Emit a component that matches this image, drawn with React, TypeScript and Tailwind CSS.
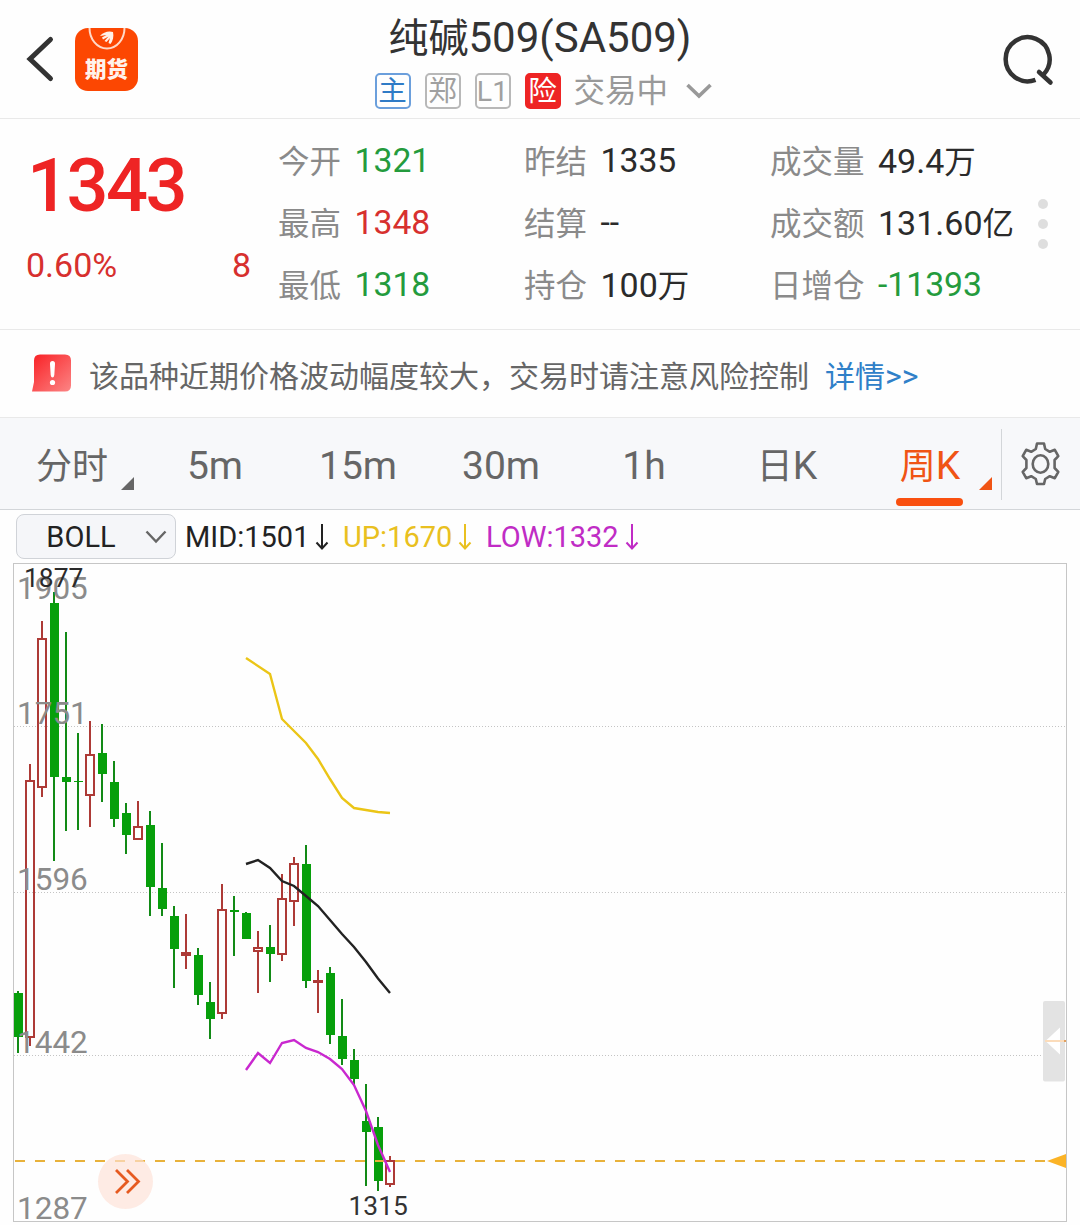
import React from "react";

type Candle = [kind: "up" | "down", high: number, top: number, bottom: number, low: number];

// Weekly candles, one every 12 units, starting at x = 18.
const candles: Candle[] = [
  ["down", 991, 993, 1037, 1053],
  ["up", 764, 780, 1038, 1046],
  ["up", 621, 638, 788, 797],
  ["down", 592, 603, 777, 861],
  ["down", 632, 777, 782, 831],
  ["down", 733, 781, 782, 830],
  ["up", 721, 754, 796, 827],
  ["down", 724, 753, 774, 802],
  ["down", 761, 782, 819, 827],
  ["down", 803, 813, 835, 854],
  ["up", 801, 826, 840, 840],
  ["down", 811, 825, 887, 916],
  ["down", 843, 888, 909, 916],
  ["down", 906, 916, 949, 988],
  ["up", 914, 952, 956, 969],
  ["down", 948, 955, 995, 1005],
  ["down", 982, 1002, 1019, 1039],
  ["up", 884, 909, 1014, 1019],
  ["down", 896, 910, 912, 956],
  ["down", 912, 913, 939, 939],
  ["up", 931, 947, 952, 993],
  ["down", 925, 947, 954, 982],
  ["up", 874, 898, 955, 961],
  ["up", 857, 863, 902, 926],
  ["down", 845, 864, 981, 988],
  ["up", 970, 980, 983, 1013],
  ["down", 967, 973, 1035, 1044],
  ["down", 999, 1036, 1059, 1065],
  ["down", 1049, 1060, 1079, 1086],
  ["down", 1084, 1121, 1132, 1186],
  ["down", 1117, 1127, 1181, 1191],
  ["up", 1156, 1160, 1185, 1187],
];

const upperBand =
  "246,658 270,674 282,719 306,743 318,759 330,779 342,798 354,808 378,812 390,813";
const middleBand =
  "246,864 258,860 270,868 282,881 294,886 306,896 318,906 330,920 342,934 354,947 366,962 378,978.5 390,993";
const lowerBand =
  "246,1070 258,1053 270,1063 282,1043 294,1040 306,1048 318,1052 330,1059 342,1069 354,1085 366,1111 378,1145 390,1172";

const axis = [
  ["1905", 599],
  ["1751", 724],
  ["1596", 890],
  ["1442", 1053],
  ["1287", 1219],
] as const;

function CandleShape({ data, x }: { data: Candle; x: number }) {
  const [kind, high, top, bottom, low] = data;
  if (kind === "down") {
    return (
      <g fill="#079f0b">
        <rect x={x - 1} y={high} width={2} height={low - high} fill="#128a16" />
        <rect x={x - 4} y={top} width={9} height={bottom - top} />
      </g>
    );
  }
  return (
    <g fill="#ad3a36">
      <rect x={x - 1} y={high} width={2} height={top - high} />
      <rect x={x - 1} y={bottom} width={2} height={low - bottom} />
      {bottom - top < 5 ? (
        <rect x={x - 5} y={top} width={10} height={bottom - top} />
      ) : (
        <rect x={x - 4} y={top + 1} width={8} height={bottom - top - 2} fill="none" stroke="#ad3a36" strokeWidth={2} />
      )}
    </g>
  );
}

function Chart() {
  return (
    <svg className="block h-[662px] w-full" viewBox="0 563 1080 662" fontFamily="Roboto, sans-serif">
      <rect x="13.5" y="563.5" width="1053" height="658" fill="none" stroke="#c6c6c6" />
      {[726.5, 892.5, 1055.5].map((y) => (
        <line key={y} x1="14" x2="1066" y1={y} y2={y} stroke="#c4c4c4" strokeDasharray="1 2" />
      ))}
      {candles.map((c, i) => (
        <CandleShape key={i} data={c} x={18 + i * 12} />
      ))}
      {axis.map(([label, y]) => (
        <text key={label} x="17" y={y} fontSize="31.5" fill="#8b8b8b">
          {label}
        </text>
      ))}
      <text x="24" y="587" fontSize="26.4" fill="#2a2a2a">1877</text>
      <text x="348.5" y="1215" fontSize="26.4" fill="#333">1315</text>
      <polyline points={upperBand} fill="none" stroke="#ebc516" strokeWidth="2.4" />
      <polyline points={middleBand} fill="none" stroke="#222" strokeWidth="2.4" />
      <line x1="15" x2="1048" y1="1161" y2="1161" stroke="#e9b23a" strokeWidth="2.2" strokeDasharray="10 10" />
      <polyline points={lowerBand} fill="none" stroke="#c928cf" strokeWidth="2.4" />
      <path d="M1047 1161 L1066 1154 V1168 Z" fill="#fbb326" />
      <circle cx="125.5" cy="1181.5" r="27.5" fill="#fde0d6" fillOpacity="0.66" />
      <path d="M116 1170 L127.5 1181.5 L116 1193 M127 1170 L138.5 1181.5 L127 1193" fill="none" stroke="#e65a20" strokeWidth="2.8" />
      <rect x="1043" y="1001" width="22" height="80.500" rx="2" fill="#e3e3e3" />
      <path d="M1045.5 1041 L1060 1027.5 V1054.5 Z" fill="#fff" />
      <line x1="1045" x2="1065" y1="1041" y2="1041" stroke="#fbdcbb" strokeWidth="2" />
      <rect x="1064" y="1040" width="2" height="2" fill="#e0a060" />
    </svg>
  );
}

function AppLogo() {
  return (
    <div className="relative h-[63px] w-[63px] overflow-hidden rounded-[13px] bg-[#fc4702]">
      <svg className="absolute inset-0" width="63" height="63" viewBox="0 0 63 63">
        <path d="M14.5 0 C14.5 11 22 20.5 32 20.5 S49.5 11 49.5 0" fill="none" stroke="#ffd9c7" strokeWidth="2" />
        <path d="M25 8 C28 4 34 2.5 38 4 C39 8 38 13 35.500 16 L33.500 15 L35 10 L31.500 14 L29.500 13 L33.500 8.500 L28 11.500 L27 9.500 L31.500 7 Z" fill="#fff1e8" />
      </svg>
      <div className="absolute left-[10px] top-[30px] whitespace-nowrap text-[21.500px] font-black leading-[24px] text-[#fff3ec]">期货</div>
    </div>
  );
}

function Tag({ text, tone }: { text: string; tone: string }) {
  return (
    <span className={"flex h-[36px] w-[36px] shrink-0 items-center justify-center rounded-[5px] border-2 pt-[2px] text-[28.500px] leading-none " + tone}>
      {text}
    </span>
  );
}

function Header() {
  return (
    <header className="flex h-[119px] border-b border-[#e9e9e9]">
      <div className="flex w-[340px] items-center pl-[25px]">
        <svg width="30" height="48" viewBox="0 0 30 48" className="mr-[20px]">
          <path d="M25.500 4.500 L5 24 L25.500 43.500" fill="none" stroke="#333" strokeWidth="5" strokeLinecap="round" />
        </svg>
        <AppLogo />
      </div>
      <div className="flex w-[400px] flex-col items-center">
        <h1 className="mt-[12px] whitespace-nowrap text-[42px] leading-[52px] text-[#333]">
          <span className="text-[40px]">纯碱</span>509(SA509)
        </h1>
        <div className="mt-[8px] flex h-[36px] w-[340px] items-center gap-[14px] pl-[4.500px]">
          <Tag text="主" tone="border-[#6b9fdc] text-[#2f7bc6]" />
          <Tag text="郑" tone="border-[#b8b8b8] text-[#a0a0a0]" />
          <Tag text="L1" tone="border-[#b8b8b8] text-[#a0a0a0]" />
          <Tag text="险" tone="border-[#ee2424] bg-[#ee2424] text-white" />
          <span className="-ml-px mt-[2px] whitespace-nowrap text-[31.500px] leading-[36px] text-[#999]">交易中</span>
          <svg width="28" height="18" viewBox="0 0 28 18" className="ml-[3px] shrink-0">
            <path d="M2.500 3 L14 14 L25.500 3" fill="none" stroke="#999" strokeWidth="3.600" />
          </svg>
        </div>
      </div>
      <div className="flex flex-1 justify-end pr-[25px] pt-[33px]">
        <svg width="53" height="54" viewBox="0 0 53 54">
          <path d="M33.500 46.800 A22 22 0 1 1 41.500 41.500" fill="none" stroke="#333" strokeWidth="4.500" />
          <path d="M37 39 L48.500 49.500" fill="none" stroke="#333" strokeWidth="4.500" strokeLinecap="round" />
        </svg>
      </div>
    </header>
  );
}

const stats: { label: string; value: string; unit?: string; color: string }[] = [
  { label: "今开", value: "1321", color: "text-[#249b3d]" },
  { label: "昨结", value: "1335", color: "text-[#2b2b2b]" },
  { label: "成交量", value: "49.4", unit: "万", color: "text-[#2b2b2b]" },
  { label: "最高", value: "1348", color: "text-[#d7302e]" },
  { label: "结算", value: "--", color: "text-[#2b2b2b]" },
  { label: "成交额", value: "131.60", unit: "亿", color: "text-[#2b2b2b]" },
  { label: "最低", value: "1318", color: "text-[#249b3d]" },
  { label: "持仓", value: "100", unit: "万", color: "text-[#2b2b2b]" },
  { label: "日增仓", value: "-11393", color: "text-[#249b3d]" },
];

function Quote() {
  return (
    <section className="flex h-[211px] border-b border-[#e9e9e9]">
      <div className="w-[278px] pl-[26px]">
        <div className="ml-px mt-[27px] text-[74px] font-medium leading-[80px] tracking-[-2.600px] text-[#ee2424]">1343</div>
        <div className="mt-[18px] flex w-[225px] justify-between text-[34px] leading-[42px] text-[#d7302e]">
          <span>0.60%</span>
          <span>8</span>
        </div>
      </div>
      <div className="grid w-[746px] grid-cols-[246px_246px_254px] grid-rows-[62px_62px_62px] pt-[12px]">
        {stats.map((s) => (
          <div key={s.label} className="flex items-center whitespace-nowrap leading-[62px]">
            <span className="mt-[2px] text-[31.500px] text-[#8a8a8a]">{s.label}</span>
            <span className={(s.unit ? "ml-[13.500px] text-[34px] " : "-mt-[2px] ml-[13.500px] text-[33.700px] ") + s.color}>
              {s.value}
              {s.unit && <span className="text-[31.500px]">{s.unit}</span>}
            </span>
          </div>
        ))}
      </div>
      <div className="flex flex-col gap-[10px] pl-[14px] pt-[80px]">
        <i className="h-[10px] w-[10px] rounded-full bg-[#dedede]" />
        <i className="h-[10px] w-[10px] rounded-full bg-[#dedede]" />
        <i className="h-[10px] w-[10px] rounded-full bg-[#dedede]" />
      </div>
    </section>
  );
}

function Notice() {
  return (
    <section className="flex h-[88px] items-center border-b border-[#e9e9e9] pl-[32px]">
      <svg width="40" height="38" viewBox="0 0 40 38" className="mb-px shrink-0">
        <defs>
          <linearGradient id="alert" x1="0" y1="0" x2="1" y2="1">
            <stop offset="0.1" stopColor="#f92a2e" />
            <stop offset="1" stopColor="#fc8585" />
          </linearGradient>
        </defs>
        <path d="M8 0.500 H33 Q39 0.500 39 6.500 V31.500 Q39 37.500 33 37.500 H0 L2 28 V6.500 Q2 0.500 8 0.500 Z" fill="url(#alert)" />
        <path d="M18 9.500 Q18 7 20.500 7 Q23 7 23 9.500 L22.300 21 Q22 23.500 20.500 23.500 Q19 23.500 18.700 21 Z" fill="#fff" />
        <circle cx="20.500" cy="28.500" r="2.600" fill="#fff" />
      </svg>
      <span className="ml-[17px] mt-[6px] whitespace-nowrap text-[30px] leading-[40px] text-[#666]">
        该品种近期价格波动幅度较大，交易时请注意风险控制
      </span>
      <a className="ml-[16px] mt-[6px] whitespace-nowrap text-[30px] leading-[40px] text-[#2f80c8]">
        详情<span className="text-[32px]">&gt;&gt;</span>
      </a>
    </section>
  );
}

const tabs = [
  { cjk: "分时", latin: "", menu: true },
  { cjk: "", latin: "5m" },
  { cjk: "", latin: "15m" },
  { cjk: "", latin: "30m" },
  { cjk: "", latin: "1h" },
  { cjk: "日", latin: "K" },
  { cjk: "周", latin: "K", menu: true, active: true },
];

function Tabs() {
  return (
    <nav className="flex h-[92px] border-b border-[#d3d6d9] bg-[#f7f8fa]">
      {tabs.map((t) => (
        <div
          key={t.cjk + t.latin}
          className={"relative flex w-[143px] justify-center whitespace-nowrap pl-px text-[39px] leading-[96px] " + (t.active ? "text-[#f05414]" : "text-[#666]")}
        >
          {t.cjk && <span className="mt-px text-[36px]">{t.cjk}</span>}
          {t.latin}
          {t.menu && (
            <svg width="13" height="13" viewBox="0 0 13 13" className="absolute right-[9px] top-[59px]">
              <path d="M13 0 V13 H0 Z" fill="currentColor" />
            </svg>
          )}
          {t.active && <span className="absolute bottom-[3px] left-[38px] h-[8px] w-[67px] rounded-full bg-[#f9500f]" />}
        </div>
      ))}
      <div className="mt-[11px] h-[71px] w-px bg-[#d3d6d9]" />
      <svg width="40" height="46" viewBox="0 0 40 46" className="ml-[18px] mt-[23px]" fill="none" stroke="#666" strokeWidth="2.600" strokeLinejoin="round">
        <path d="M17 2.500 H24 L25.200 8 L29.800 10.800 L34.800 8.800 L38.300 15.200 L34.600 19 V27 L38.300 30.800 L34.800 37.200 L29.800 35.200 L25.200 38 L24 43 H17 L15.800 38 L11.200 35.200 L6.200 37.200 L2.700 30.800 L6.400 27 V19 L2.700 15.200 L6.200 8.800 L11.200 10.800 L15.800 8 Z" />
        <ellipse cx="20.500" cy="23" rx="7.800" ry="8.800" />
      </svg>
    </nav>
  );
}

function Arrow() {
  return (
    <svg width="14" height="26" viewBox="0 0 14 26" className="ml-[6px] shrink-0">
      <path d="M7 0 V24 M1.500 18.500 L7 24.500 L12.500 18.500" fill="none" stroke="currentColor" strokeWidth="2" />
    </svg>
  );
}

function Indicators() {
  return (
    <section className="flex h-[53px] items-center whitespace-nowrap pl-[16px] text-[29px] leading-[40px]">
      <button className="flex h-[45px] w-[160px] items-center rounded-[8px] border border-[#d0d3d8] bg-[#f5f6f9] pl-[29px] text-[#222]">
        <span className="w-[70px]">BOLL</span>
        <svg width="22" height="14" viewBox="0 0 22 14" className="ml-[28.500px]">
          <path d="M1.500 1.500 L11 11.500 L20.500 1.500" fill="none" stroke="#666" strokeWidth="2.400" />
        </svg>
      </button>
      <div className="ml-[9px] flex w-[158px] items-center text-[#222]">
        MID:1501
        <Arrow />
      </div>
      <div className="flex w-[143px] items-center text-[#e9c020]">
        UP:1670
        <Arrow />
      </div>
      <div className="flex items-center text-[#c02cc5]">
        LOW:1332
        <Arrow />
      </div>
    </section>
  );
}

export default function App() {
  return (
    <main className="h-[1225px] w-[1080px] overflow-hidden bg-[#fefefe] font-['Roboto','Noto_Sans_CJK_SC',sans-serif]">
      <Header />
      <Quote />
      <Notice />
      <Tabs />
      <Indicators />
      <Chart />
    </main>
  );
}
